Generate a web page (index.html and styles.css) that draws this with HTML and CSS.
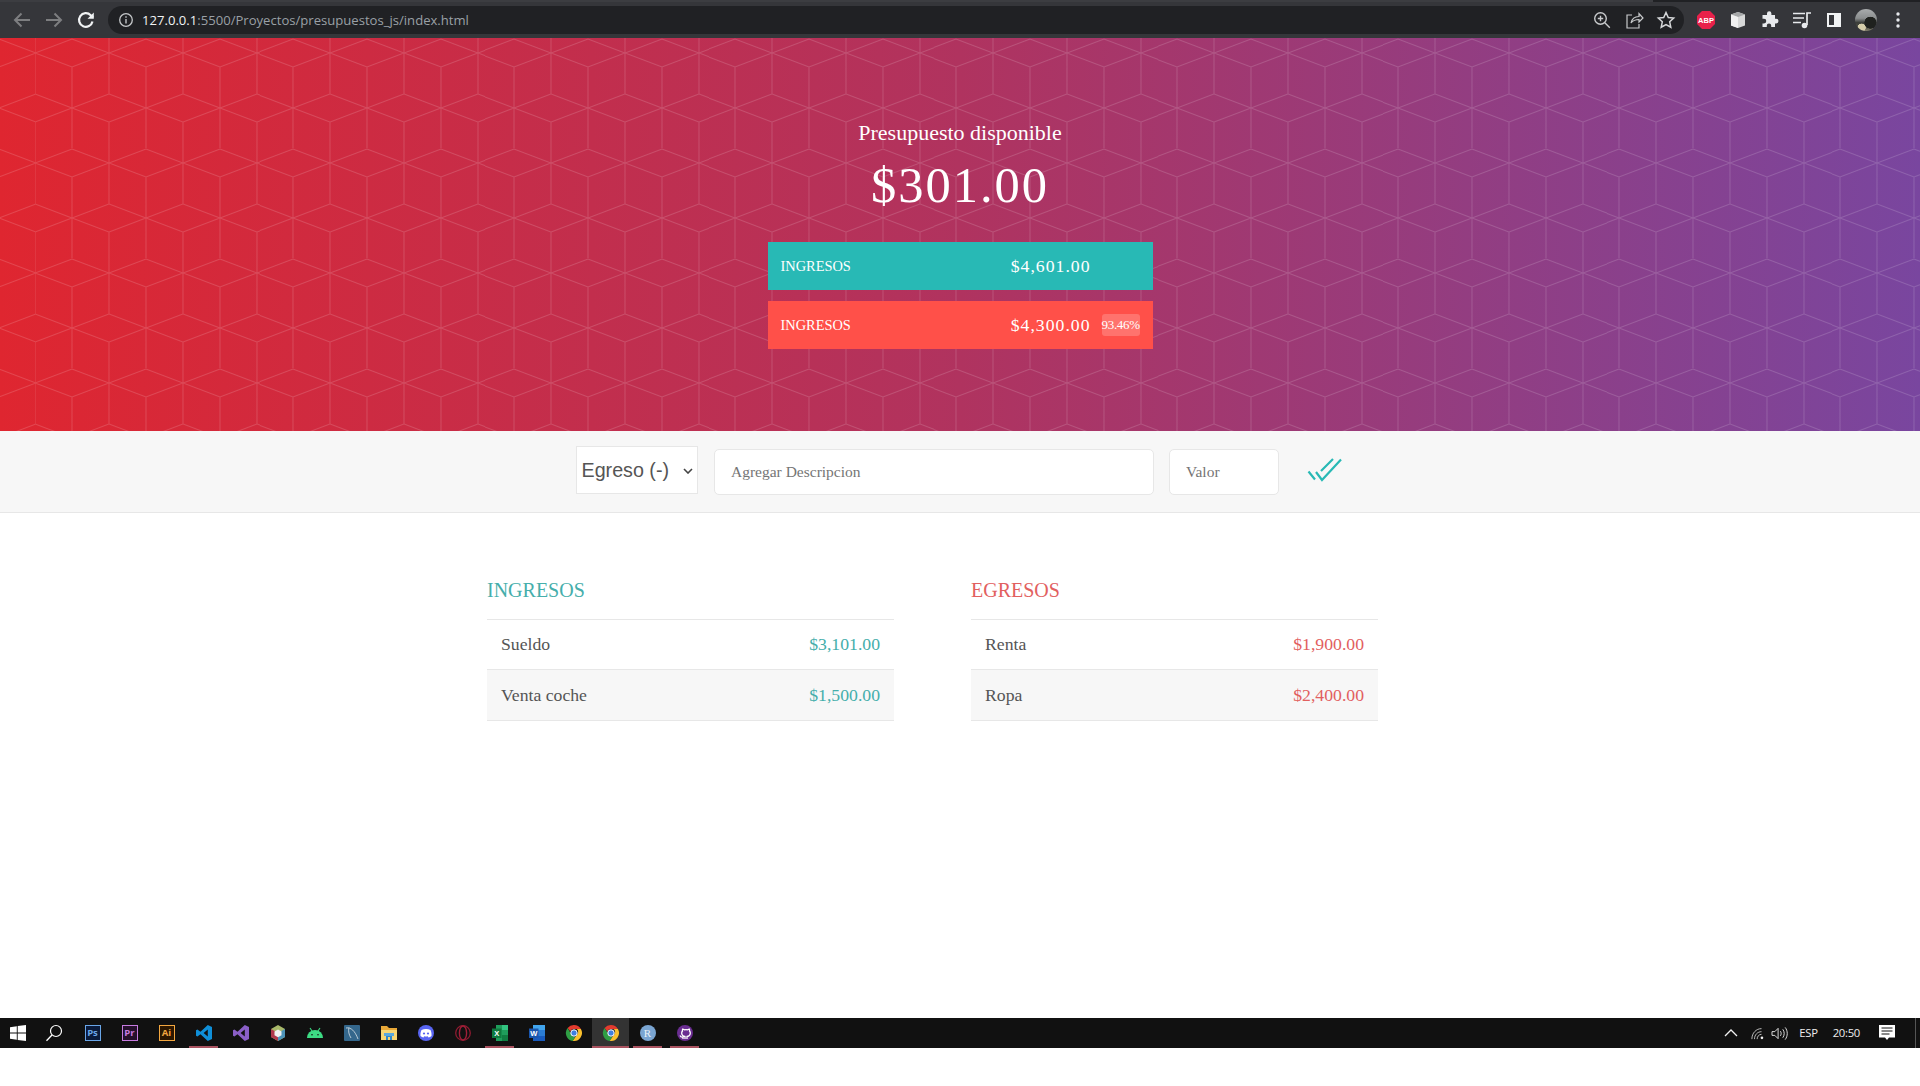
FILE: index.html
```html
<!DOCTYPE html>
<html lang="es">
<head>
<meta charset="utf-8">
<title>Presupuesto</title>
<link rel="stylesheet" href="styles.css">
</head>
<body>
<div class="page">
  <header class="browser">
    <div class="tabstrip"><span class="strip-a"></span><span class="strip-b"></span></div>
    <div class="toolbar">
      <div class="nav">
        <svg class="tool" viewBox="0 0 24 24"><path d="M20 12H5M11.5 5.5 5 12l6.500 6.500" fill="none" stroke="#7d7e80" stroke-width="2"/></svg>
        <svg class="tool" viewBox="0 0 24 24"><path d="M4 12h15M12.500 5.500 19 12l-6.500 6.500" fill="none" stroke="#7d7e80" stroke-width="2"/></svg>
        <svg class="tool" viewBox="0 0 24 24"><path d="M18.500 13.500a6.800 6.800 0 1 1-1.800-6.300L19 9.500" fill="none" stroke="#f1f3f4" stroke-width="2.200"/><path d="M19.800 4.500v6.300h-6.300z" fill="#f1f3f4"/></svg>
      </div>
      <div class="omnibox">
        <svg class="info" viewBox="0 0 16 16"><circle cx="8" cy="8" r="6.300" fill="none" stroke="#c4c7c9" stroke-width="1.300"/><path d="M8 7v4.500M8 4.300v1.400" stroke="#c4c7c9" stroke-width="1.400"/></svg>
        <span class="url"><b>127.0.0.1</b>:5500/Proyectos/presupuestos_js/index.html</span>
        <span class="omni-actions">
          <svg class="omni" viewBox="0 0 20 20"><circle cx="8.500" cy="8.500" r="5.800" fill="none" stroke="#c8cacc" stroke-width="1.400"/><path d="M8.500 5.800v5.400M5.800 8.500h5.400M12.800 12.800l5 5" stroke="#c8cacc" stroke-width="1.400"/></svg>
          <svg class="omni" viewBox="0 0 20 20"><path d="M8 5H3v13h12v-4M7 13c.8-4 3.500-6.500 8-6.500V3.500l4 4.500-4 4V9.500c-3.500 0-6 1-8 3.500z" fill="none" stroke="#c8cacc" stroke-width="1.200"/></svg>
          <svg class="omni" viewBox="0 0 20 20"><path d="m10 2.500 2.300 5 5.400.6-4 3.700 1.100 5.400-4.800-2.700-4.800 2.700 1.100-5.400-4-3.700 5.400-.6z" fill="none" stroke="#d5d7d9" stroke-width="1.500"/></svg>
        </span>
      </div>
      <div class="extensions">
        <svg class="ext" viewBox="0 0 20 20"><path d="M6 1h8l5 5v8l-5 5H6l-5-5V6z" fill="#e8214a"/><text x="10" y="13.200" class="abp">ABP</text></svg>
        <svg class="ext" viewBox="0 0 20 20"><path d="M10 2 3 4.500v11L10 18l7-2.500v-11z" fill="#d7d8d8"/><path d="M3 4.500 10 7l7-2.500L10 2z" fill="#a5a7a8"/><path d="M10 7v11l-7-2.500v-11z" fill="#f1f1f1"/></svg>
        <svg class="ext puzzle" viewBox="0 0 20 20"><path d="M8 3.500a2.200 2.200 0 0 1 4.400 0V5H16v3.800h1.200a2.300 2.300 0 0 1 0 4.600H16V17h-3.800v-1.400a2.200 2.200 0 0 0-4.400 0V17H3.500v-3.600H5a2.300 2.300 0 0 0 0-4.600H3.500V5H8z" fill="#e8eaed"/></svg>
        <svg class="ext" viewBox="0 0 20 20"><path d="M1 3.500h12M1 8h11M1 12.500h8" stroke="#e8eaed" stroke-width="1.700"/><path d="M15 15V3h4" fill="none" stroke="#e8eaed" stroke-width="1.700"/><circle cx="12.500" cy="15.500" r="2.800" fill="#e8eaed"/></svg>
        <svg class="ext" viewBox="0 0 20 20"><path fill-rule="evenodd" d="M3 3h14v14H3zM5 5v10h5V5z" fill="#f1f3f4"/></svg>
        <span class="avatar"></span>
        <svg class="ext" viewBox="0 0 20 20"><circle cx="10" cy="4" r="1.700" fill="#e8eaed"/><circle cx="10" cy="10" r="1.700" fill="#e8eaed"/><circle cx="10" cy="16" r="1.700" fill="#e8eaed"/></svg>
      </div>
    </div>
  </header>

  <section class="hero">
    <div class="budget-title">Presupuesto disponible</div>
    <div class="budget-value">$301.00</div>
    <div class="summary income">
      <span class="summary-label">INGRESOS</span>
      <span class="summary-amount">$4,601.00</span>
      <span class="summary-badge empty"></span>
    </div>
    <div class="summary expense">
      <span class="summary-label">INGRESOS</span>
      <span class="summary-amount">$4,300.00</span>
      <span class="summary-badge">93.46%</span>
    </div>
  </section>

  <section class="form-bar">
    <select class="type-select"><option>Egreso (-)</option><option>Ingreso (+)</option></select>
    <input class="field field-desc" type="text" placeholder="Agregar Descripcion">
    <input class="field field-value" type="text" placeholder="Valor">
    <svg class="check" viewBox="0 0 60 40"><path d="M13.500 21.500 20 29.500M21 22l6 8 19-20.500M26 21 38 9" fill="none" stroke="#28b9b5" stroke-width="2.200"/></svg>
  </section>

  <main class="lists">
    <section class="list list-in">
      <h2 class="list-title">INGRESOS</h2>
      <div class="row"><span class="row-name">Sueldo</span><span class="row-amount">$3,101.00</span></div>
      <div class="row alt"><span class="row-name">Venta coche</span><span class="row-amount">$1,500.00</span></div>
    </section>
    <section class="list list-out">
      <h2 class="list-title">EGRESOS</h2>
      <div class="row"><span class="row-name">Renta</span><span class="row-amount">$1,900.00</span></div>
      <div class="row alt"><span class="row-name">Ropa</span><span class="row-amount">$2,400.00</span></div>
    </section>
  </main>

  <footer class="taskbar">
    <div class="apps">
      <span class="app start"><svg class="ti" viewBox="0 0 18 18"><path d="M1 3.200 7.800 2.200v6.300H1zM8.700 2.100 17 1v7.500H8.700zM1 9.500h6.800v6.300L1 14.800zM8.700 9.500H17V17l-8.300-1.100z" fill="#fff"/></svg></span>
      <span class="app search"><svg class="ti" viewBox="0 0 18 18"><circle cx="11" cy="7" r="5.500" fill="none" stroke="#fff" stroke-width="1.200"/><path d="M7 11 1.500 16.800" stroke="#fff" stroke-width="1.300"/></svg></span>
      <span class="app"><span class="adobe ps">Ps</span></span>
      <span class="app"><span class="adobe pr">Pr</span></span>
      <span class="app"><span class="adobe ai">Ai</span></span>
      <span class="app open"><svg class="ti" viewBox="0 0 18 18"><path d="M12.800 1 17 3v12l-4.200 2-7.300-6.800L2.400 12.600 1 11.800V6.200l1.400-.8 3.100 2.400zM12.800 5.600 8.600 9l4.200 3.400z" fill="#0f8fd8"/></svg></span>
      <span class="app"><svg class="ti" viewBox="0 0 18 18"><path d="M12.800 1 17 3v12l-4.200 2-7.300-6.800L2.400 12.600 1 11.800V6.200l1.400-.8 3.100 2.400zM12.800 5.600 8.600 9l4.200 3.400z" fill="#8a5fc7"/></svg></span>
      <span class="app"><svg class="ti" viewBox="0 0 18 18"><path d="M9 1 2 5v8l7 4 7-4V5z" fill="#a9b96a"/><path d="M2 13V5l7 4v8z" fill="#b0384b"/><path d="M16 13V5L9 9v8z" fill="#4c93b8"/><path d="M9 5.500 5.500 7.500v3.800L9 13.300l3.500-2V7.500z" fill="#f1f1f1"/></svg></span>
      <span class="app"><svg class="ti" viewBox="0 0 18 18"><path d="M1 14a8 8 0 0 1 16 0z" fill="#3ddc84"/><path d="M4 4l2 3M14 4l-2 3" stroke="#3ddc84" stroke-width="1.100"/><circle cx="6" cy="10.800" r=".8" fill="#111"/><circle cx="12" cy="10.800" r=".8" fill="#111"/></svg></span>
      <span class="app"><svg class="ti" viewBox="0 0 18 18"><rect x="1" y="1" width="16" height="16" rx="1" fill="#34678c"/><path d="M3 4c5-1 9 3 12 11M6 3.500C5 7 6 11 8 14" fill="none" stroke="#c7d5de" stroke-width=".9"/></svg></span>
      <span class="app"><svg class="ti" viewBox="0 0 18 18"><path d="M1 2h6l2 2h8v3H1z" fill="#e8a838"/><path d="M1 6h16v10H1z" fill="#f7d774"/><path d="M6 16v-5h6v5h-2v-3H8v3z" fill="#2f88c9"/><path d="M4 9h10v3H4z" fill="#5aa9dd"/></svg></span>
      <span class="app"><svg class="ti" viewBox="0 0 18 18"><circle cx="9" cy="9" r="8" fill="#5865f2"/><path d="M4.500 6c2.800-1.500 6.200-1.500 9 0 .9 2 1.200 4 1 6-1 .8-2 1.200-3 1.400l-.7-1.100c-1.200.3-2.400.3-3.600 0l-.7 1.100c-1-.2-2-.6-3-1.400-.2-2 .1-4 1-6z" fill="#fff"/><circle cx="7" cy="9.500" r="1.100" fill="#5865f2"/><circle cx="11" cy="9.500" r="1.100" fill="#5865f2"/></svg></span>
      <span class="app"><svg class="ti" viewBox="0 0 18 18"><circle cx="9" cy="9" r="7.300" fill="none" stroke="#8e1b30" stroke-width="1.300"/><ellipse cx="9" cy="9" rx="3.600" ry="7" fill="none" stroke="#a01f38" stroke-width="1.400"/></svg></span>
      <span class="app open"><svg class="ti" viewBox="0 0 18 18"><path d="M5 1h12v16H5z" fill="#1f9d5b"/><path d="M11 1h6v5h-6z" fill="#33c481"/><path d="M11 11h6v6h-6z" fill="#107c41"/><path d="M1 4.500h9.500v9.500H1z" fill="#0f7a3e"/><text x="5.700" y="12" class="doc-letter">X</text></svg></span>
      <span class="app"><svg class="ti" viewBox="0 0 18 18"><path d="M5 1h12v16H5z" fill="#2b7cd3"/><path d="M5 1h12v5H5z" fill="#41a5ee"/><path d="M5 12h12v5H5z" fill="#185abd"/><path d="M1 4.500h9.500v9.500H1z" fill="#1a56ad"/><text x="5.700" y="12" class="doc-letter">W</text></svg></span>
      <span class="app"><svg class="ti" viewBox="0 0 18 18"><use href="#chrome"/></svg></span>
      <span class="app open active"><svg class="ti" viewBox="0 0 18 18"><defs><g id="chrome"><path d="M9 1a8 8 0 0 1 6.900 4H9a4 4 0 0 0-3.700 2.400L2.600 4A8 8 0 0 1 9 1z" fill="#e33b2e"/><path d="M2.600 4l3.500 6a4 4 0 0 0 4 2.900L7.800 16.900A8 8 0 0 1 2.600 4z" fill="#2f9e44"/><path d="M15.900 5A8 8 0 0 1 7.800 16.900l3.500-5.500A4 4 0 0 0 11.800 5z" fill="#fbc02d"/><circle cx="9" cy="9" r="3.200" fill="#3f7fe0" stroke="#fff" stroke-width="1"/></g></defs><use href="#chrome"/></svg></span>
      <span class="app open"><span class="round r-app">R</span></span>
      <span class="app open"><svg class="ti" viewBox="0 0 18 18"><circle cx="9" cy="9" r="8" fill="#6a2d91"/><path d="M7 15v-2c-2 .4-2.600-.5-3-1.500M11 15v-2.500c2.200-.3 3.300-1.500 3.300-3.500 0-.8-.3-1.500-.8-2 .2-.7.100-1.300-.1-1.900-.7 0-1.300.3-1.900.7a6 6 0 0 0-3 0c-.6-.4-1.200-.7-1.900-.7-.2.6-.3 1.200-.1 1.900-.5.5-.8 1.200-.8 2 0 2 1.100 3.200 3.300 3.500V15" fill="none" stroke="#fff" stroke-width="1.300"/></svg></span>
    </div>
    <div class="tray">
      <svg class="tray-icon chevron" viewBox="0 0 16 16"><path d="M2 11 8 5l6 6" fill="none" stroke="#f2f2f2" stroke-width="1.300"/></svg>
      <svg class="tray-icon wifi" viewBox="0 0 16 16"><path d="M1 15c0-7 5-12 11-12M4 15c0-5 3.500-8.500 8-8.500M7 15c0-3 2-5.500 5-5.500" fill="none" stroke="#cfcfcf" stroke-width="1"/><circle cx="12.500" cy="13.500" r="1.500" fill="#f2f2f2"/></svg>
      <svg class="tray-icon speaker" viewBox="0 0 18 16"><path d="M1 6h3l3.500-3.500v11L4 10H1zM10 5.500c1 1.500 1 3.500 0 5M12.500 3.500c2 2.500 2 6.500 0 9M15 1.500c3 3.500 3 9.500 0 13" fill="none" stroke="#e6e6e6" stroke-width="1"/></svg>
      <span class="tray-text lang">ESP</span>
      <span class="tray-text clock">20:50</span>
      <svg class="tray-icon note" viewBox="0 0 16 16"><path d="M0 0h16v12.500h-6L8 15l-2-2.500H0z" fill="#fff"/><path d="M2.500 3h11M2.500 6h11M2.500 9h8" stroke="#111" stroke-width="1"/></svg>
      <span class="desktop-edge"></span>
    </div>
  </footer>
</div>
</body>
</html>
```

FILE: styles.css
```css
* { box-sizing: border-box; }
html, body { margin: 0; padding: 0; height: 100%; background: #fff; }
body { font-family: "Liberation Serif", "Times New Roman", serif; color: #555; overflow: hidden; }
.page { display: flex; flex-direction: column; height: 1086px; }

/* browser chrome */
.browser { height: 38px; flex: none; background: #35363a; }
.tabstrip { display: flex; height: 2px; }
.strip-a { width: 1653px; background: #3c3d41; }
.strip-b { flex: 1; background: #202124; }
.toolbar { display: flex; align-items: center; height: 36px; padding-bottom: 0; }
.nav { display: flex; width: 108px; padding-left: 10px; gap: 8px; flex: none; }
.tool { width: 24px; height: 24px; display: block; }
.omnibox { width: 1576px; height: 28px; background: #202124; border-radius: 14px; display: flex; align-items: center; flex: none; padding-left: 10px; }
.info { width: 16px; height: 16px; flex: none; }
.url { margin-left: 8px; font: 13.1px/28px "Open Sans", sans-serif; color: #9aa0a6; white-space: nowrap; }
.url b { font-weight: 400; color: #f1f3f4; }
.omni-actions { margin-left: auto; display: flex; gap: 12px; padding-right: 8px; }
.omni { width: 20px; height: 20px; display: block; }
.extensions { display: flex; align-items: center; gap: 12px; padding-left: 12px; }
.ext { width: 20px; height: 20px; display: block; flex: none; }
.puzzle { margin-left: -1px; margin-right: 1px; }
.abp { font: 700 7.500px "Liberation Sans", sans-serif; fill: #fff; text-anchor: middle; }
.avatar {
  width: 22px; height: 22px; border-radius: 50%; flex: none; margin: 0 -1px;
  background:
    radial-gradient(circle at 70% 62%, #1f211e 0 28%, transparent 30%),
    radial-gradient(circle at 30% 85%, #d5cdaa 0 16%, transparent 18%),
    linear-gradient(#a9acad 0%, #8b8e8f 42%, #3b3d39 62%, #55554a 85%, #8a8672 100%);
}

/* hero */
.hero {
  height: 393px; flex: none; display: flex; flex-direction: column; align-items: center;
  padding-top: 82px; color: #fff;
  background-color: #b2335e;
  background-image:
    url("data:image/svg+xml,%3Csvg xmlns='http://www.w3.org/2000/svg' width='73.68' height='110' viewBox='0 0 73.68 110'%3E%3Cg fill='none' stroke='%23fff' stroke-opacity='.15' stroke-width='1'%3E%3Cpath d='M0 15 36.840 1 73.680 15 36.840 29zM36.840 29V111M0 15V56M73.680 15V56M0 84V110M73.680 84V110M0 0V15M73.680 0V15M0 56 36.840 70 0 84M73.680 56 36.840 70 73.680 84'/%3E%3C/g%3E%3C/svg%3E"),
    linear-gradient(to right, #df2630 0%, #b0335f 50%, #79469f 100%);
  background-size: 73.68px 110px, 100% 100%;
  background-position: 35.500px 0, 0 0;
  background-repeat: repeat, no-repeat;
}
.budget-title { font-size: 22px; line-height: 26px; }
.budget-value { font-size: 50.500px; line-height: 58px; letter-spacing: 2px; margin-top: 10px; }
.summary { width: 385px; height: 48px; display: flex; align-items: center; padding: 0 13px; flex: none; }
.income { background: #28b9b5; margin-top: 28px; }
.expense { background: #ff5049; margin-top: 11px; }
.summary-label { font-size: 14.400px; flex: 1; }
.summary-amount { font-size: 17.700px; letter-spacing: 1px; }
.summary-badge { width: 38px; height: 22px; margin-left: 11px; font-size: 13px; line-height: 22px; text-align: center; border-radius: 3px; background: rgba(255,255,255,.2); white-space: nowrap; letter-spacing: -.3px; }
.summary-badge.empty { background: transparent; }

/* form */
.form-bar { height: 82px; flex: none; background: #f7f7f7; border-bottom: 1px solid #e7e7e7; display: flex; align-items: flex-start; padding-left: 576px; }
.type-select {
  width: 122px; height: 48px; margin-top: 15px; padding: 0 0 0 4.500px; flex: none;
  font: 19.700px "Liberation Sans", Arial, sans-serif; color: #555;
  border: 1px solid #e7e7e7; border-radius: 0; appearance: none;
  background: #fff url("data:image/svg+xml,%3Csvg xmlns='http://www.w3.org/2000/svg' width='10' height='6' viewBox='0 0 10 6'%3E%3Cpath d='M1 1l4 4 4-4' fill='none' stroke='%23444' stroke-width='1.600'/%3E%3C/svg%3E") no-repeat 106px 21px;
}
.field { height: 46px; margin-top: 18px; border: 1px solid #e7e7e7; border-radius: 5px; background: #fff; font: 15.500px "Liberation Serif", serif; color: #555; padding: 0 16px; flex: none; }
.field::placeholder { color: #757575; opacity: 1; }
.field-desc { width: 440px; margin-left: 16px; }
.field-value { width: 110px; margin-left: 15px; }
.check { width: 60px; height: 40px; margin: 19px 0 0 16px; flex: none; }

/* lists */
.lists { flex: 1; display: flex; padding: 0 0 0 487px; gap: 77px; align-items: flex-start; }
.list { width: 407px; padding-top: 66px; }
.list-title { margin: 0; height: 40px; font-size: 20px; line-height: 22px; font-weight: 400; border-bottom: 1px solid #e7e7e7; box-sizing: content-box; padding-bottom: 0; }
.list-in .list-title, .list-in .row-amount { color: #45aeab; }
.list-out .list-title, .list-out .row-amount { color: #e2605f; }
.row { height: 50px; padding: 0 14px; display: flex; justify-content: space-between; align-items: center; border-bottom: 1px solid #e7e7e7; font-size: 17.700px; }
.row.alt { background: #f7f7f7; height: 51px; }
.row-name { color: #555; }

/* taskbar */
.taskbar { height: 30px; flex: none; margin-bottom: 38px; background: #111; display: flex; justify-content: space-between; }
.apps { display: flex; }
.app { width: 37px; height: 30px; display: flex; align-items: center; justify-content: center; position: relative; flex: none; }
.app.start { width: 36px; }
.app.search { width: 36px; margin-right: 2px; }
.ti { width: 18px; height: 18px; display: block; }
.open::after { content: ""; position: absolute; left: 4px; right: 4px; bottom: 0; height: 2px; background: #a95360; }
.active { background: #333; }
.active::after { left: 0; right: 0; }
.adobe { width: 16px; height: 16px; border: 1px solid; font: 700 9.500px/14px "Open Sans", sans-serif; text-align: center; background: #1a1428; }
.ps { color: #6aa6e8; border-color: #6aa6e8; background: #0a1a3a; }
.pr { color: #c77be0; border-color: #c77be0; background: #25102c; }
.ai { color: #f3a740; border-color: #f3a740; background: #2c1700; }
.doc-letter { font: 700 7.500px "Liberation Sans", sans-serif; fill: #fff; text-anchor: middle; }
.round { width: 16px; height: 16px; border-radius: 50%; text-align: center; font: 11px/16px "Liberation Serif", serif; }
.r-app { background: #7aa5d2; color: #e9f1f8; }
.tray { display: flex; align-items: center; padding-right: 4px; color: #eee; }
.tray-icon { display: block; flex: none; }
.chevron { width: 16px; height: 16px; margin-right: 1px; }
.wifi { width: 14px; height: 14px; margin-left: 11px; }
.speaker { width: 17px; height: 15px; margin-left: 6px; }
.tray-text { font: 11.300px/30px "Open Sans", sans-serif; letter-spacing: -.3px; }
.lang { margin-left: 11px; }
.clock { margin-left: 15px; }
.note { width: 16px; height: 16px; margin-left: 19px; }
.desktop-edge { width: 1px; height: 30px; background: #555; margin-left: 20px; }
```
